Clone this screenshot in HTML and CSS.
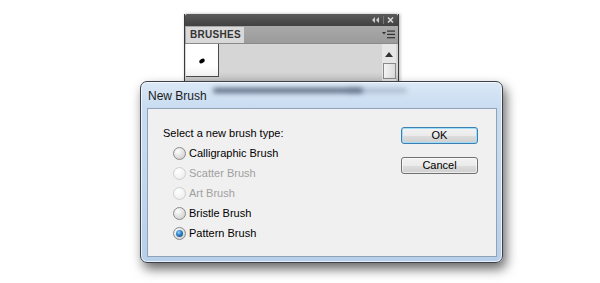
FILE: index.html
```html
<!DOCTYPE html>
<html>
<head>
<meta charset="utf-8">
<link rel="stylesheet" href="styles.css">
</head>
<body>
<div class="stage">
  <div class="panel">
    <div class="panel-bar">
      <svg class="bar-icons" width="24" height="8" viewBox="0 0 24 8">
        <path d="M4 1 L1 4 L4 7 Z M8 1 L5 4 L8 7 Z" fill="#cfcfcf"/>
        <rect x="12" y="0" width="1" height="8" fill="#777"/>
        <path d="M17 1.5 L22 6.5 M22 1.5 L17 6.5" stroke="#d8d8d8" stroke-width="1.6"/>
      </svg>
    </div>
    <div class="panel-tabs">
      <div class="tab">BRUSHES</div>
      <svg class="menu-icon" width="13" height="9" viewBox="0 0 13 9">
        <path d="M0 2 L4 2 L2 4.5 Z" fill="#333"/>
        <rect x="5" y="0.5" width="8" height="1.2" fill="#333"/>
        <rect x="5" y="3.8" width="8" height="1.2" fill="#333"/>
        <rect x="5" y="7.1" width="8" height="1.2" fill="#333"/>
      </svg>
    </div>
    <div class="panel-body">
      <div class="swatch"><span class="dot"></span></div>
      <div class="scroll">
        <svg class="up" width="8" height="5" viewBox="0 0 8 5"><path d="M0 5 L4 0 L8 5 Z" fill="#333"/></svg>
        <div class="thumb"></div>
      </div>
    </div>
  </div>

  <div class="dialog">
    <div class="title-row">
      <span class="title">New Brush</span>
      <span class="glass-blur"></span>
      <span class="glass-blur light"></span>
    </div>
    <div class="content">
      <div class="options">
        <div class="prompt">Select a new brush type:</div>
        <div class="radio"><span class="circle"></span>Calligraphic Brush</div>
        <div class="radio disabled"><span class="circle"></span>Scatter Brush</div>
        <div class="radio disabled"><span class="circle"></span>Art Brush</div>
        <div class="radio"><span class="circle"></span>Bristle Brush</div>
        <div class="radio"><span class="circle checked"></span>Pattern Brush</div>
      </div>
      <div class="buttons">
        <div class="btn default">OK</div>
        <div class="btn">Cancel</div>
      </div>
    </div>
  </div>
</div>
</body>
</html>
```

FILE: styles.css
```css
html, body {
  margin: 0;
  padding: 0;
  background: #ffffff;
}
body {
  font-family: "Liberation Sans", Arial, sans-serif;
  width: 600px;
  height: 283px;
  overflow: hidden;
}
.stage {
  position: relative;
  width: 600px;
  height: 283px;
  padding-top: 14px;
  box-sizing: border-box;
}

/* Brushes panel */
.panel {
  margin-left: 184px;
  width: 215px;
  height: 100px;
  border-left: 1px solid #3a3a3a;
  border-right: 1px solid #3a3a3a;
  box-sizing: border-box;
  display: flex;
  flex-direction: column;
  box-shadow: 1px 0 3px rgba(0,0,0,0.3);
}
.panel-bar {
  height: 12px;
  background: linear-gradient(#5a5a5a, #414141);
  border-radius: 2px 2px 0 0;
  display: flex;
  justify-content: flex-end;
  align-items: center;
  padding-right: 3px;
}
.bar-icons { display: block; }
.panel-tabs {
  height: 17px;
  background: linear-gradient(#a9a9a9, #9b9b9b);
  border-bottom: 1px solid #8a8a8a;
  display: flex;
  align-items: stretch;
  justify-content: space-between;
  padding-right: 3px;
}
.tab {
  width: 58px;
  margin-left: 1px;
  margin-top: 1px;
  background: #d9d9d9;
  color: #333333;
  font-family: "Liberation Sans", Arial, sans-serif;
  font-weight: bold;
  font-size: 10px;
  line-height: 16px;
  padding-left: 4px;
  box-sizing: border-box;
  letter-spacing: 0.3px;
}
.menu-icon { align-self: center; }
.panel-body {
  flex: 1;
  display: flex;
  justify-content: space-between;
  background: linear-gradient(#d6d6d6 0, #d6d6d6 28px, #c2c2c2 38px);
  padding: 0 2px 0 1px;
}
.swatch {
  width: 33px;
  height: 33px;
  background: linear-gradient(#ffffff 70%, #f0f0f0);
  border-right: 1px solid #4a4a4a;
  border-bottom: 1px solid #4a4a4a;
  box-sizing: border-box;
  position: relative;
  display: flex;
  align-items: center;
  justify-content: center;
}
.dot {
  width: 6px;
  height: 4px;
  border-radius: 50%;
  background: #000;
  transform: rotate(-30deg);
  margin-top: 1px;
}
.scroll {
  width: 14px;
  background: #e6e6e6;
  display: flex;
  flex-direction: column;
  align-items: center;
}
.up { margin-top: 8px; }
.thumb {
  margin-top: 6px;
  width: 13px;
  height: 16px;
  border: 1px solid #8a8a8a;
  background: linear-gradient(90deg, #f4f4f4, #dcdcdc);
  box-sizing: border-box;
}

/* Dialog (modal, overlays the panel) */
.dialog {
  position: absolute;
  left: 140px;
  top: 81px;
  width: 363px;
  height: 182px;
  box-sizing: border-box;
  border: 1px solid #3c4048;
  border-radius: 7px;
  background: linear-gradient(#dbe8f6 0, #c9dcf1 25px, #c2d7ee 60%, #b7cfea 100%);
  box-shadow: inset 0 0 0 1px rgba(255,255,255,0.7), 3px 6px 12px rgba(0,0,0,0.6);
  padding: 0 5px 5px 6px;
  display: flex;
  flex-direction: column;
}
.title-row {
  height: 26px;
  position: relative;
  display: flex;
  align-items: center;
}
.title {
  font-family: "Liberation Sans", Arial, sans-serif;
  font-size: 12px;
  color: #1b1b1b;
  margin-left: 1px;
  margin-top: 1px;
}
.glass-blur {
  position: absolute;
  left: 66px;
  top: 6px;
  width: 150px;
  height: 5px;
  background: rgba(60,72,96,0.8);
  filter: blur(2.5px);
  border-radius: 3px;
}
.glass-blur.light {
  left: 200px;
  width: 60px;
  background: rgba(100,115,140,0.35);
}
.content {
  flex: 1;
  background: #f0f0f0;
  border: 1px solid #8ea2b8;
  display: flex;
  justify-content: space-between;
  padding: 14px 18px 0 15px;
  font-family: "Liberation Sans", Arial, sans-serif;
  font-size: 11px;
  color: #000;
}
.options { display: flex; flex-direction: column; }
.prompt { line-height: 20px; }
.radio {
  line-height: 20px;
  height: 20px;
  display: flex;
  align-items: center;
  padding-left: 10px;
}
.radio.disabled { color: #a0a0a0; }
.circle {
  width: 13px;
  height: 13px;
  border-radius: 50%;
  box-sizing: border-box;
  border: 1px solid #8b8b8b;
  background: radial-gradient(circle at 35% 30%, #ffffff 0, #e4e4e4 45%, #c9c9c9 100%);
  margin-right: 3px;
  position: relative;
}
.disabled .circle {
  border-color: #cfcfcf;
  background: radial-gradient(circle at 35% 30%, #ffffff 0, #f2f2f2 60%, #e6e6e6 100%);
}
.circle.checked::after {
  content: "";
  position: absolute;
  left: 2px;
  top: 2px;
  width: 7px;
  height: 7px;
  border-radius: 50%;
  background: radial-gradient(circle at 40% 35%, #8fd3ff 0, #2a7fc0 45%, #0f3f6e 100%);
}
.buttons {
  display: flex;
  flex-direction: column;
  gap: 13px;
  margin-top: 4px;
}
.btn {
  width: 77px;
  height: 17px;
  box-sizing: border-box;
  border: 1px solid #707070;
  border-radius: 3px;
  background: linear-gradient(#f2f2f2 0, #ebebeb 50%, #dddddd 51%, #cfcfcf 100%);
  box-shadow: inset 0 0 0 1px rgba(255,255,255,0.6);
  text-align: center;
  font-size: 11px;
  line-height: 15px;
  color: #000;
}
.btn.default {
  border-color: #3c7fb1;
  box-shadow: inset 0 0 0 1px #9fdcf7;
}
```
